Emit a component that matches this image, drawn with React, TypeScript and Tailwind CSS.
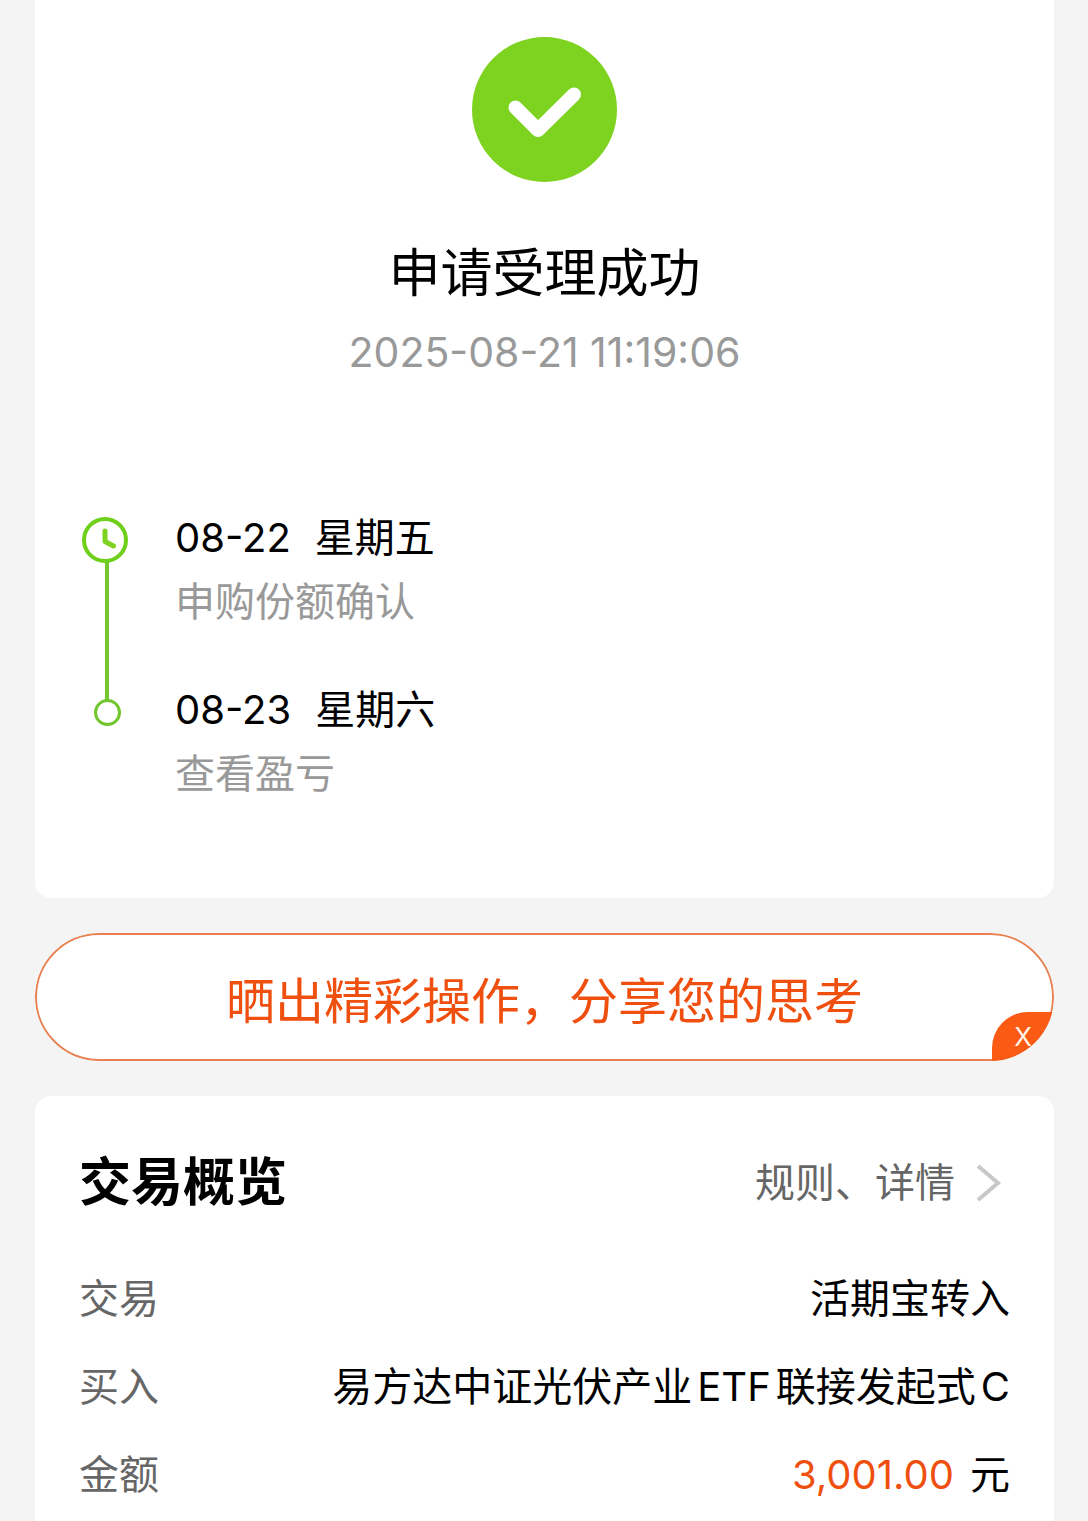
import React from "react";

const steps = [
  { date: "08-22", day: "星期五", text: "申购份额确认" },
  { date: "08-23", day: "星期六", text: "查看盈亏" },
];

const Timeline = () => {
  return (
    <div className="flex pl-[47px]">
      <svg
        className="mt-[11px] shrink-0"
        width="46"
        height="210"
        viewBox="0 0 46 210"
        fill="none"
      >
        <path d="M25 45V183" stroke="#72c62e" strokeWidth="4" />
        <circle cx="23" cy="23" r="21" stroke="#6fd01a" strokeWidth="4" />
        <path
          d="M23 14V24.500L31.500 29"
          stroke="#7ed321"
          strokeWidth="5"
          strokeLinecap="round"
          strokeLinejoin="round"
        />
        <circle cx="25.500" cy="195.500" r="12" stroke="#72c62e" strokeWidth="3" />
      </svg>
      <ol className="pl-[47px] flex flex-col gap-11">
        {steps.map((step) => (
          <li key={step.date} className="text-[40px] leading-[64px]">
            <p className="flex gap-6 text-black">
              <span>{step.date}</span>
              <span>{step.day}</span>
            </p>
            <p className="text-[#999999]">{step.text}</p>
          </li>
        ))}
      </ol>
    </div>
  );
};

const page = () => {
  return (
    <div className="min-h-screen flex flex-col bg-[#f4f4f4] pl-[35px] pr-[34px] font-['Inter','Noto_Sans_CJK_SC',sans-serif] text-black">
      <section className="bg-white rounded-b-2xl pt-[37px] pb-[92px]">
        <div className="flex flex-col items-center text-center">
          <svg width="145" height="145" viewBox="0 0 145 145" fill="none">
            <circle cx="72.500" cy="72.500" r="72.500" fill="#7ed321" />
            <path
              d="M43.500 70.500L66 93L102 57.500"
              stroke="#ffffff"
              strokeWidth="14"
              strokeLinecap="round"
              strokeLinejoin="round"
            />
          </svg>
          <h1 className="mt-14 text-[52px] leading-[72px]">申请受理成功</h1>
          <p className="mt-[10px] text-[41px] leading-[64px] text-[#999999]">
            2025-08-21 11:19:06
          </p>
        </div>
        <div className="mt-[122px]">
          <Timeline />
        </div>
      </section>

      <div className="relative mt-[35px] rounded-full overflow-hidden">
        <button
          type="button"
          className="block w-full h-[128px] pt-[10px] rounded-full border-2 border-[#e8804f] bg-white text-[49px] text-[#f0500f]"
        >
          晒出精彩操作，分享您的思考
        </button>
        <button
          type="button"
          className="absolute right-0 bottom-0 w-[62px] h-[49px] rounded-tl-[36px] bg-[#fa5a14] text-[26px] text-[#fff3e6]"
        >
          X
        </button>
      </div>

      <section className="mt-[35px] grow bg-white rounded-t-2xl pt-[51px] px-11">
        <div className="flex items-center justify-between">
          <h2 className="text-[52px] leading-[72px] font-bold">交易概览</h2>
          <a href="#" className="flex items-center text-[40px] text-[#666666]">
            规则、详情
            <svg
              className="ml-[21px] mr-2"
              width="26"
              height="38"
              viewBox="0 0 26 38"
              fill="none"
            >
              <path d="M2 2L22 19L2 36" stroke="#c8c8c8" strokeWidth="4" />
            </svg>
          </a>
        </div>
        <dl className="mt-9 text-[40px] leading-[88px]">
          <div className="flex justify-between">
            <dt className="text-[#666666]">交易</dt>
            <dd>活期宝转入</dd>
          </div>
          <div className="flex justify-between">
            <dt className="text-[#666666]">买入</dt>
            <dd className="flex gap-[5px]">
              <span>易方达中证光伏产业</span>
              <span>ETF</span>
              <span>联接发起式</span>
              <span>C</span>
            </dd>
          </div>
          <div className="flex justify-between">
            <dt className="text-[#666666]">金额</dt>
            <dd className="flex gap-4">
              <span className="text-[#f0500f]">3,001.00</span>
              <span>元</span>
            </dd>
          </div>
        </dl>
      </section>
    </div>
  );
};

export default page;
